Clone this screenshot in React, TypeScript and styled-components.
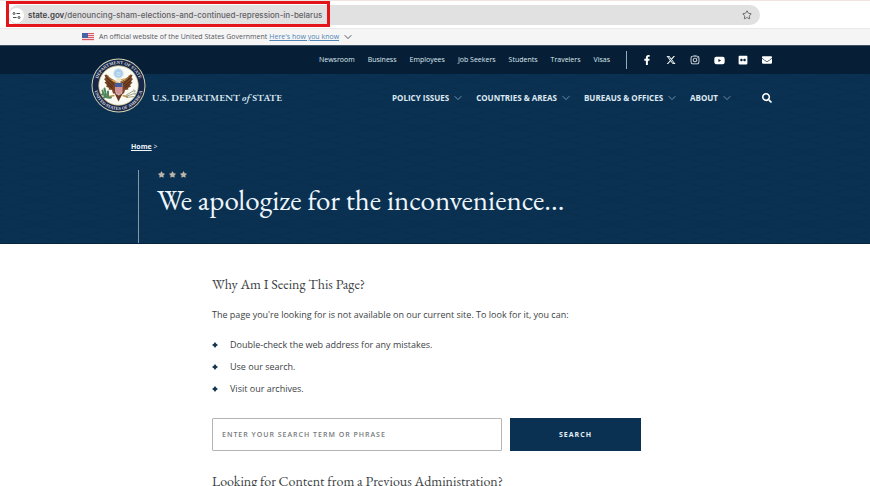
import React from "react";
import styled, { createGlobalStyle } from "styled-components";
import { FaFacebookF, FaInstagram, FaYoutube, FaFlickr, FaEnvelope, FaSearch, FaStar } from "react-icons/fa";
import { FaXTwitter } from "react-icons/fa6";
import { Star } from "lucide-react";

const navy = "#0a3152";
const midnight = "#061f36";
const sans = `"Open Sans", "Noto Sans", sans-serif`;
const serif = `"EB Garamond", "Liberation Serif", serif`;

const waves = `url("data:image/svg+xml,%3Csvg xmlns='http://www.w3.org/2000/svg' width='48' height='12'%3E%3Cpath d='M0 3q12 -4 24 0t24 0M0 9q12 4 24 0t24 0' fill='none' stroke='%23052440' stroke-opacity='.25'/%3E%3C/svg%3E")`;

const GlobalStyle = createGlobalStyle`
  *, *::before, *::after { box-sizing: border-box; }
  html { scrollbar-width: none; }
  body { margin: 0; background: #fff; color: #3c3f44; font-family: ${sans}; }
  h1, h2, p, ul { margin: 0; padding: 0; font-weight: 400; }
  ul { list-style: none; }
  button { font: inherit; color: inherit; background: none; border: 0; padding: 0; cursor: pointer; }
  a { color: inherit; }
`;

const BrowserBar = styled.div`
  position: relative;
  height: 29px;
  padding: 4px 110px 4px 8px;
  border-top: 1px solid #efe4e0;
  border-bottom: 1px solid #e9e9e9;
`;
const Address = styled.div`
  display: flex;
  align-items: center;
  height: 20px;
  padding: 0 8px 0 1px;
  border-radius: 10px;
  background: #e1e1e2;
`;
const SiteInfo = styled.button`
  display: grid;
  place-items: center;
  width: 15px;
  height: 15px;
  border-radius: 50%;
  background: #fff;
`;
const Url = styled.span`
  flex: 1;
  padding-left: 4px;
  color: #626265;
  font: 500 8px/12px Inter, sans-serif;
  b { color: #3f4042; font-weight: 600; }
`;
const Bookmark = styled.button`
  display: flex;
`;
const Highlight = styled.div`
  position: absolute;
  left: 6px;
  top: 0;
  width: 324px;
  height: 26px;
  border: 3px solid #e3141a;
`;

const GovBanner = styled.div`
  display: flex;
  align-items: center;
  height: 16px;
  padding-left: 82px;
  background: #f5f5f6;
  color: #55585c;
  font-size: 7px;
  line-height: 10px;
`;
const FlagIcon = styled.svg`
  margin-right: 5px;
`;
const BannerLink = styled.a`
  margin: 0 5px 0 2px;
  color: #4f86b5;
`;

const Header = styled.header`
  position: relative;
  color: #dfe9f1;
`;
const SealLink = styled.a`
  position: absolute;
  left: 91px;
  top: 13px;
  line-height: 0;
`;
const UtilityBar = styled.div`
  display: flex;
  justify-content: flex-end;
  align-items: center;
  height: 29px;
  padding-right: 97px;
  background: ${midnight};
  border-top: 1px solid #3b5266;
`;
const UtilityNav = styled.nav`
  display: flex;
  gap: 13px;
  padding-right: 16px;
  border-right: 1px solid #9aabb8;
  font-size: 7px;
  font-weight: 500;
  line-height: 18px;
  a { text-decoration: none; }
`;
const Social = styled.div`
  display: flex;
  align-items: center;
  margin-left: 14px;
  gap: 12px;
  color: #fff;
  a { display: grid; place-items: center; width: 12px; height: 12px; }
`;
const MainBar = styled.div`
  display: flex;
  align-items: center;
  height: 48px;
  padding: 0 98px 0 152px;
  background: ${waves} ${navy};
`;
const Wordmark = styled.a`
  margin-right: auto;
  font: 600 10px/14px ${serif};
  text-decoration: none;
  white-space: nowrap;
`;
const MainNav = styled.nav`
  display: flex;
  gap: 14px;
  margin-right: 31px;
`;
const NavButton = styled.button`
  display: flex;
  align-items: center;
  gap: 5px;
  font-size: 8px;
  line-height: 12px;
  font-weight: 700;
  white-space: nowrap;
  svg { color: #7390a7; }
`;
const SearchToggle = styled.button`
  display: flex;
  color: #fff;
`;

const Hero = styled.section`
  padding: 19px 130px 0 131px;
  background: ${waves} ${navy};
  border-bottom: 1px solid #062440;
  color: #eef6fb;
`;
const Breadcrumb = styled.nav`
  font-size: 7px;
  line-height: 12px;
  a { font-weight: 700; }
`;
const TitleBlock = styled.div`
  margin: 17px 0 0 7px;
  padding: 1px 0 25px 18px;
  border-left: 1px solid #8398a9;
`;
const Stars = styled.div`
  display: flex;
  gap: 4px;
  padding-left: 1px;
  color: #bdb5aa;
`;
const Title = styled.h1`
  margin-top: 4px;
  font: 400 29px/36px ${serif};
`;

const Content = styled.main`
  padding: 31px 229px 0 212px;
`;
const Heading = styled.h2`
  font: 400 14px/18px ${serif};
`;
const Intro = styled.p`
  margin-top: 15px;
  font-size: 9px;
  line-height: 14px;
`;
const Tips = styled.ul`
  display: grid;
  gap: 8px;
  margin: 16px 0 22px;
  font-size: 9px;
  line-height: 14px;
`;
const Tip = styled.li`
  display: flex;
  align-items: center;
  gap: 12px;
`;
const SearchForm = styled.form`
  display: flex;
  gap: 8px;
  margin-bottom: 21px;
`;
const SearchInput = styled.input`
  flex: 1;
  min-width: 0;
  height: 33px;
  padding: 0 9px;
  border: 1px solid #b5b5b5;
  border-radius: 1px;
  font: 600 7px/12px ${sans};
  letter-spacing: 1px;
  text-transform: uppercase;
  &::placeholder { color: #777a7d; opacity: 1; }
`;
const Submit = styled.button`
  width: 131px;
  height: 33px;
  background: ${navy};
  color: #e6f0f6;
  font-size: 7px;
  font-weight: 700;
  letter-spacing: 1px;
`;

const Flag = () => (
  <FlagIcon width="12" height="8" viewBox="0 0 12 8" aria-hidden="true">
    <rect width="12" height="8" fill="#f2d9dc" />
    <path d="M0 .5h12M0 2.5h12M0 4.5h12M0 6.5h12" stroke="#d45b68" />
    <rect width="6" height="5" fill="#4862a6" />
  </FlagIcon>
);

const Caret = () => (
  <svg width="8" height="6" viewBox="0 0 8 6" fill="none" stroke="currentColor" aria-hidden="true">
    <path d="M.7 1.200L4 4.600L7.300 1.200" />
  </svg>
);

const Seal = () => (
  <svg width="55" height="55" viewBox="0 0 110 110" role="img" aria-label="Department of State seal">
    <defs>
      <path id="arcTop" d="M12 55A43 43 0 0 1 98 55" />
      <path id="arcBottom" d="M6 55A49 49 0 0 0 104 55" />
    </defs>
    <circle cx="55" cy="55" r="54" fill="#d8d6b4" />
    <circle cx="55" cy="55" r="52" fill="#182747" />
    <circle cx="55" cy="55" r="39.500" fill="#fbfbf5" stroke="#c9bd83" strokeWidth="1.500" />
    <g fill="#d9dce0" fontFamily="Liberation Serif, serif" fontWeight="700" fontSize="9">
      <text><textPath href="#arcTop" startOffset="50%" textAnchor="middle">DEPARTMENT OF STATE</textPath></text>
      <text><textPath href="#arcBottom" startOffset="50%" textAnchor="middle">UNITED STATES OF AMERICA</textPath></text>
    </g>
    <circle cx="55" cy="31" r="9.500" fill="#a9cdea" stroke="#d3e4f0" strokeWidth="2" />
    <path d="M51 29h8M50 32h10M52 35h6" stroke="#d9ebf7" strokeWidth="1.200" />
    <path d="M53 48C45 44 37 40 31 33L27 34L29 40L26 42L30 47L27 49L32 54L30 57L36 60L35 63L42 64L44 71H66L68 64L75 63L74 60L80 57L78 54L83 49L80 47L84 42L81 40L83 34L79 33C73 40 65 44 57 48Z" fill="#794424" />
    <path d="M31 39l15 14M31 46l13 11M33 53l10 7M79 39L64 53M79 46L66 57M77 53l-10 7" stroke="#4b2819" strokeWidth="1.800" />
    <path d="M33 34c3 8 10 12 19 15M77 34c-3 8-10 12-19 15" fill="none" stroke="#b38749" strokeWidth="2" />
    <path d="M50 49l1-7 4-3 5 2 2 3-4 1 1 5z" fill="#eee7cf" />
    <path d="M43 44l7 4M60 44l8-2" stroke="#dca957" strokeWidth="3" />
    <path d="M46 68L55 87L65 68Z" fill="#65391f" />
    <path d="M47 75l-11 2M63 75l11 3" stroke="#c79549" strokeWidth="3" />
    <path d="M48 50h15v17c0 4-4 6-7.500 8C52 73 48 71 48 67z" fill="#e8e2df" />
    <path d="M50 57v14M54 57v16M58 57v16M62 57v12" stroke="#b9464f" strokeWidth="2" />
    <path d="M48 50h15v8H48z" fill="#455c99" />
    <path d="M40 79c-11 2-16-5-17-14M34 77l-9 2M31 73l-9 0M29 70l-2-9M34 76l0-9" fill="none" stroke="#52865c" strokeWidth="4" strokeLinecap="round" />
    <path d="M69 75l17-10M69 77l18-6M70 79l16-2" stroke="#939575" strokeWidth="1.800" />
    <path d="M85 63l4 3-4 2M86 70l4 1-3 3" stroke="#9bada2" strokeWidth="2" fill="none" />
  </svg>
);

const TuneIcon = () => (
  <svg width="9" height="9" viewBox="0 0 9 9" fill="none" stroke="#4b4b4d" aria-hidden="true">
    <circle cx="2" cy="2.500" r="1" /><path d="M4.500 2.500H8M1 6.500h3.500" /><circle cx="7" cy="6.500" r="1" />
  </svg>
);

const Diamond = () => (
  <svg width="6" height="6" viewBox="0 0 6 6" aria-hidden="true">
    <path d="M3 0Q4 2 6 3Q4 4 3 6Q2 4 0 3Q2 2 3 0Z" fill="#12364f" />
  </svg>
);

const utilityLinks = ["Newsroom", "Business", "Employees", "Job Seekers", "Students", "Travelers", "Visas"];
const sections = ["POLICY ISSUES", "COUNTRIES & AREAS", "BUREAUS & OFFICES", "ABOUT"];
const tips = ["Double-check the web address for any mistakes.", "Use our search.", "Visit our archives."];
const social = [
  { name: "Facebook", icon: <FaFacebookF size={10} /> },
  { name: "X", icon: <FaXTwitter size={10} /> },
  { name: "Instagram", icon: <FaInstagram size={10} /> },
  { name: "YouTube", icon: <FaYoutube size={11} /> },
  { name: "Flickr", icon: <FaFlickr size={10} /> },
  { name: "Email", icon: <FaEnvelope size={10} /> },
];

export default function App() {
  return (
    <>
      <GlobalStyle />
      <BrowserBar>
        <Address>
          <SiteInfo aria-label="Site information"><TuneIcon /></SiteInfo>
          <Url><b>state.gov</b>/denouncing-sham-elections-and-continued-repression-in-belarus</Url>
          <Bookmark aria-label="Bookmark"><Star size={10} color="#55565a" /></Bookmark>
        </Address>
        <Highlight />
      </BrowserBar>
      <GovBanner>
        <Flag />
        <span>An official website of the United States Government</span>
        <BannerLink href="#about-site">Here's how you know</BannerLink>
        <Caret />
      </GovBanner>
      <Header>
        <UtilityBar>
          <UtilityNav aria-label="Utility">
            {utilityLinks.map((label) => <a href="#utility" key={label}>{label}</a>)}
          </UtilityNav>
          <Social>
            {social.map(({ name, icon }) => <a href="#social" aria-label={name} key={name}>{icon}</a>)}
          </Social>
        </UtilityBar>
        <MainBar>
          <Wordmark href="#home">U.S. DEPARTMENT <i>of</i> STATE</Wordmark>
          <MainNav aria-label="Main">
            {sections.map((label) => (
              <NavButton key={label}>{label}<Caret /></NavButton>
            ))}
          </MainNav>
          <SearchToggle aria-label="Open search"><FaSearch size={10} /></SearchToggle>
        </MainBar>
        <SealLink href="#home"><Seal /></SealLink>
      </Header>
      <Hero>
        <Breadcrumb aria-label="Breadcrumb"><a href="#home">Home</a> &gt;</Breadcrumb>
        <TitleBlock>
          <Stars aria-hidden="true"><FaStar size={7} /><FaStar size={7} /><FaStar size={7} /></Stars>
          <Title>We apologize for the inconvenience...</Title>
        </TitleBlock>
      </Hero>
      <Content>
        <Heading>Why Am I Seeing This Page?</Heading>
        <Intro>The page you're looking for is not available on our current site. To look for it, you can:</Intro>
        <Tips>
          {tips.map((tip) => <Tip key={tip}><Diamond />{tip}</Tip>)}
        </Tips>
        <SearchForm onSubmit={(event) => event.preventDefault()}>
          <SearchInput aria-label="Search" placeholder="Enter your search term or phrase" />
          <Submit type="submit">SEARCH</Submit>
        </SearchForm>
        <Heading>Looking for Content from a Previous Administration?</Heading>
      </Content>
    </>
  );
}
